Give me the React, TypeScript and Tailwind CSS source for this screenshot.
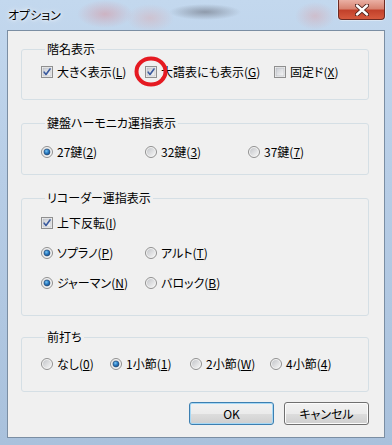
import React from "react";

const Check = ({ checked }: { checked: boolean }) => (
  <svg width="12" height="12" viewBox="0 0 12 12" className="shrink-0">
    <defs>
      <linearGradient id={checked ? "cbg1" : "cbg0"} x1="0" y1="0" x2="1" y2="1">
        <stop offset="0" stopColor="#c9ccd2" />
        <stop offset="1" stopColor="#f7f7f7" />
      </linearGradient>
    </defs>
    <rect x="0.5" y="0.5" width="11" height="11" fill="#f4f4f4" stroke="#8f8f8f" />
    <rect x="2" y="2" width="8" height="8" fill={`url(#${checked ? "cbg1" : "cbg0"})`} stroke="#b5b9bf" strokeWidth="0.6" />
    {checked && (
      <path d="M3.2 6.2 L5 8.4 L9 3" fill="none" stroke="#3a5a9e" strokeWidth="1.6" strokeLinecap="round" strokeLinejoin="round" />
    )}
  </svg>
);

const Radio = ({ checked }: { checked: boolean }) => (
  <svg width="12" height="12" viewBox="0 0 12 12" className="shrink-0">
    <defs>
      <linearGradient id="rbg" x1="0" y1="0" x2="1" y2="1">
        <stop offset="0" stopColor="#c4c6ca" />
        <stop offset="1" stopColor="#f5f5f5" />
      </linearGradient>
      <radialGradient id="rdot" cx="0.4" cy="0.35" r="0.7">
        <stop offset="0" stopColor="#7cc6f2" />
        <stop offset="0.5" stopColor="#2a7cc4" />
        <stop offset="1" stopColor="#14487e" />
      </radialGradient>
    </defs>
    <circle cx="6" cy="6" r="5.5" fill="#f4f4f4" stroke="#8f8f8f" />
    <circle cx="6" cy="6" r="4" fill="url(#rbg)" />
    {checked && <circle cx="6" cy="6" r="3" fill="url(#rdot)" stroke="#1a3f6a" strokeWidth="0.5" />}
  </svg>
);

const Item = ({
  kind,
  checked,
  w,
  children,
  circle,
}: {
  kind: "check" | "radio";
  checked: boolean;
  w: string;
  children: React.ReactNode;
  circle?: boolean;
}) => (
  <div className={`relative flex items-center gap-[4px] h-[16px] ${w}`}>
    {kind === "check" ? <Check checked={checked} /> : <Radio checked={checked} />}
    <span className="leading-[16px] whitespace-nowrap">{children}</span>
    {circle && (
      <svg width="34" height="31" viewBox="0 0 34 31" className="absolute left-[-11px] top-[-8px]">
        <ellipse cx="17" cy="15.5" rx="14.5" ry="13" fill="none" stroke="#e51a22" strokeWidth="4" />
      </svg>
    )}
  </div>
);

const Group = ({
  title,
  h,
  pt,
  children,
}: {
  title: string;
  h: string;
  pt: string;
  children: React.ReactNode;
}) => (
  <fieldset className={`border border-[#d5dfe5] rounded-[3px] pl-[19px] ${h} ${pt}`}>
    <legend className="ml-[4px] px-[2px] leading-[14px] text-black">{title}</legend>
    {children}
  </fieldset>
);

export default function App() {
  return (
    <div
      className="w-[392px] h-[445px] flex flex-col px-[7px] overflow-hidden text-[12px] text-black [font-feature-settings:'palt'] bg-[radial-gradient(ellipse_28px_14px_at_105px_14px,rgba(214,150,160,0.55),transparent),radial-gradient(ellipse_36px_8px_at_205px_12px,rgba(80,80,90,0.45),transparent),radial-gradient(ellipse_24px_14px_at_150px_18px,rgba(220,170,175,0.45),transparent),radial-gradient(ellipse_20px_14px_at_315px_16px,rgba(220,160,165,0.45),transparent),linear-gradient(180deg,#c3d8ee_0%,#b7cde6_40%,#a9c1dc_100%)]"
      style={{ fontFamily: '"Noto Sans CJK JP", "Noto Sans", sans-serif' }}
    >
      <div className="h-[30px] flex items-start justify-between shrink-0">
        <span className="mt-[7px] pl-[1px] leading-[16px] text-[12px] text-black [text-shadow:0_0_6px_#ffffff,0_0_3px_#ffffff]">
          オプション
        </span>
        <div className="w-[47px] h-[20px] rounded-b-[4px] border border-t-0 border-[#6e2a22] bg-[linear-gradient(180deg,#eab0a4_0%,#d88472_45%,#c2412b_55%,#d65a3e_100%)] flex items-center justify-center shadow-[0_0_0_1px_rgba(255,255,255,0.4)]">
          <svg width="14" height="12" viewBox="0 0 14 12">
            <path d="M2 1.5 L12 10.5 M12 1.5 L2 10.5" stroke="#4a1d18" strokeWidth="4.2" strokeLinecap="round" />
            <path d="M2 1.5 L12 10.5 M12 1.5 L2 10.5" stroke="#ffffff" strokeWidth="2.4" strokeLinecap="round" />
          </svg>
        </div>
      </div>
      <div className="h-[408px] shrink-0 border border-[#7b8ea3] bg-[#f0f0f0] pl-[13px] pr-[15px] flex flex-col">
        <div className="mt-[11px]">
          <Group title="階名表示" h="h-[58px]" pt="pt-[8px]">
            <div className="flex">
              <Item kind="check" checked w="w-[104px]">
                大きく表示(<u>L</u>)
              </Item>
              <Item kind="check" checked w="w-[129px]" circle>
                大譜表にも表示(<u>G</u>)
              </Item>
              <Item kind="check" checked={false} w="w-[90px]">
                固定ド(<u>X</u>)
              </Item>
            </div>
          </Group>
        </div>
        <div className="mt-[16px]">
          <Group title="鍵盤ハーモニカ運指表示" h="h-[59px]" pt="pt-[14px]">
            <div className="flex">
              <Item kind="radio" checked w="w-[104px]">
                27鍵(<u>2</u>)
              </Item>
              <Item kind="radio" checked={false} w="w-[103px]">
                32鍵(<u>3</u>)
              </Item>
              <Item kind="radio" checked={false} w="w-[80px]">
                37鍵(<u>7</u>)
              </Item>
            </div>
          </Group>
        </div>
        <div className="mt-[16px]">
          <Group title="リコーダー運指表示" h="h-[125px]" pt="pt-[10px]">
            <div className="flex flex-col gap-[14px]">
              <Item kind="check" checked w="w-[104px]">
                上下反転(<u>I</u>)
              </Item>
              <div className="flex">
                <Item kind="radio" checked w="w-[104px]">
                  ソプラノ(<u>P</u>)
                </Item>
                <Item kind="radio" checked={false} w="w-[90px]">
                  アルト(<u>T</u>)
                </Item>
              </div>
              <div className="flex">
                <Item kind="radio" checked w="w-[104px]">
                  ジャーマン(<u>N</u>)
                </Item>
                <Item kind="radio" checked={false} w="w-[90px]">
                  バロック(<u>B</u>)
                </Item>
              </div>
            </div>
          </Group>
        </div>
        <div className="mt-[14px]">
          <Group title="前打ち" h="h-[62px]" pt="pt-[12px]">
            <div className="flex">
              <Item kind="radio" checked={false} w="w-[69px]">
                なし(<u>0</u>)
              </Item>
              <Item kind="radio" checked w="w-[80px]">
                1小節(<u>1</u>)
              </Item>
              <Item kind="radio" checked={false} w="w-[80px]">
                2小節(<u>W</u>)
              </Item>
              <Item kind="radio" checked={false} w="w-[80px]">
                4小節(<u>4</u>)
              </Item>
            </div>
          </Group>
        </div>
        <div className="mt-[10px] flex justify-end gap-[10px]">
          <button className="w-[85px] h-[23px] rounded-[3px] border border-[#3c7fb1] shadow-[inset_0_0_0_1px_#a6d8f5] bg-[linear-gradient(180deg,#f2f2f2_0%,#ebebeb_50%,#dddddd_51%,#cfcfcf_100%)] text-[12px] leading-[21px] text-black">
            OK
          </button>
          <button className="w-[85px] h-[23px] rounded-[3px] border border-[#707070] shadow-[inset_0_0_0_1px_#fcfcfc] bg-[linear-gradient(180deg,#f2f2f2_0%,#ebebeb_50%,#dddddd_51%,#cfcfcf_100%)] text-[12px] leading-[21px] text-black">
            キャンセル
          </button>
        </div>
      </div>
    </div>
  );
}
